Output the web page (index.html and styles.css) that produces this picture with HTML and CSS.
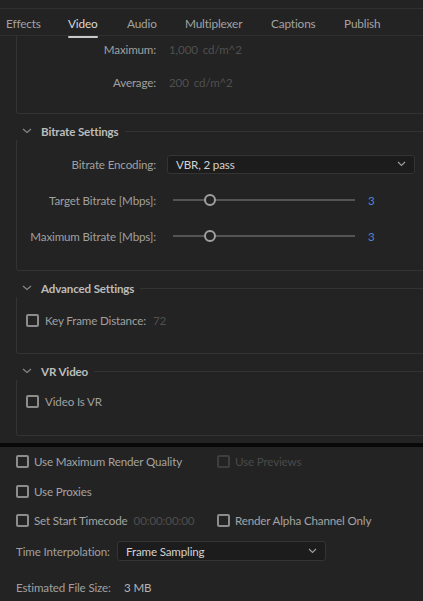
FILE: index.html
```html
<!DOCTYPE html>
<html>
<head>
<meta charset="utf-8">
<link rel="stylesheet" href="styles.css">
</head>
<body>
<div class="app">
  <div class="topstrip"></div>
  <nav class="tabs">
    <span class="tab t-effects"><span class="tl">Effects</span></span>
    <span class="tab t-video active"><span class="tl">Video</span></span>
    <span class="tab t-audio"><span class="tl">Audio</span></span>
    <span class="tab t-mux"><span class="tl">Multiplexer</span></span>
    <span class="tab t-cap"><span class="tl">Captions</span></span>
    <span class="tab t-pub"><span class="tl">Publish</span></span>
  </nav>

  <div class="scroll">
    <div class="panel panel-top">
      <div class="row r-max">
        <span class="label">Maximum:</span>
        <span class="dimval">1,000</span><span class="dimunit">cd/m^2</span>
      </div>
      <div class="row r-avg">
        <span class="label">Average:</span>
        <span class="dimval">200</span><span class="dimunit">cd/m^2</span>
      </div>
    </div>

    <section class="group">
      <div class="ghead">
        <svg class="chev" width="10" height="6" viewBox="0 0 10 6"><path d="M1 1 L5 4.5 L9 1" fill="none" stroke="#8a8a8a" stroke-width="1.1"/></svg>
        <span class="gtitle">Bitrate Settings</span>
        <span class="gline"></span>
      </div>
      <div class="panel gbody gb-bitrate">
        <div class="row">
          <span class="label">Bitrate Encoding:</span>
          <div class="select sel-enc">
            <span>VBR, 2 pass</span>
            <svg width="9" height="6" viewBox="0 0 9 6"><path d="M1 1 L4.5 4.5 L8 1" fill="none" stroke="#a0a0a0" stroke-width="1.1"/></svg>
          </div>
        </div>
        <div class="row">
          <span class="label">Target Bitrate [Mbps]:</span>
          <div class="slider"><span class="thumb"></span></div>
          <span class="sval">3</span>
        </div>
        <div class="row">
          <span class="label">Maximum Bitrate [Mbps]:</span>
          <div class="slider"><span class="thumb"></span></div>
          <span class="sval">3</span>
        </div>
      </div>
    </section>

    <section class="group">
      <div class="ghead">
        <svg class="chev" width="10" height="6" viewBox="0 0 10 6"><path d="M1 1 L5 4.5 L9 1" fill="none" stroke="#8a8a8a" stroke-width="1.1"/></svg>
        <span class="gtitle">Advanced Settings</span>
        <span class="gline"></span>
      </div>
      <div class="panel gbody gb-adv">
        <div class="row crow">
          <span class="cb"></span>
          <span class="ctext">Key Frame Distance:</span>
          <span class="kfval">72</span>
        </div>
      </div>
    </section>

    <section class="group">
      <div class="ghead">
        <svg class="chev" width="10" height="6" viewBox="0 0 10 6"><path d="M1 1 L5 4.5 L9 1" fill="none" stroke="#8a8a8a" stroke-width="1.1"/></svg>
        <span class="gtitle">VR Video</span>
        <span class="gline"></span>
      </div>
      <div class="panel gbody gb-vr">
        <div class="row crow">
          <span class="cb"></span>
          <span class="ctext">Video Is VR</span>
        </div>
      </div>
    </section>
  </div>

  <div class="divider"></div>

  <div class="bottom">
    <div class="brow b1">
      <div class="bcell"><span class="cb"></span><span class="btext">Use Maximum Render Quality</span></div>
      <div class="bcell disabled"><span class="cb"></span><span class="btext">Use Previews</span></div>
    </div>
    <div class="brow b2">
      <div class="bcell"><span class="cb"></span><span class="btext">Use Proxies</span></div>
    </div>
    <div class="brow b3">
      <div class="bcell"><span class="cb"></span><span class="btext">Set Start Timecode</span><span class="tc">00:00:00:00</span></div>
      <div class="bcell"><span class="cb"></span><span class="btext">Render Alpha Channel Only</span></div>
    </div>
    <div class="irow">
      <span class="ilabel">Time Interpolation:</span>
      <div class="select sel-interp">
        <span>Frame Sampling</span>
        <svg width="9" height="6" viewBox="0 0 9 6"><path d="M1 1 L4.5 4.5 L8 1" fill="none" stroke="#a0a0a0" stroke-width="1.1"/></svg>
      </div>
    </div>
    <div class="erow">
      <span class="elabel">Estimated File Size:</span>
      <span class="eval">3 MB</span>
    </div>
  </div>
</div>
</body>
</html>
```

FILE: styles.css
```css
* { box-sizing: border-box; }
html, body { margin: 0; padding: 0; }
body {
  background: #232323;
  font-family: "Lato", "Open Sans", sans-serif;
  font-size: 11.6px;
  letter-spacing: -0.15px;
  color: #a0a0a0;
  width: 423px;
  height: 601px;
  overflow: hidden;
}
.app { width: 423px; height: 601px; overflow: hidden; }

.topstrip { height: 9px; border-bottom: 1px solid #303030; }

.tabs {
  height: 27px;
  display: flex;
  align-items: center;
  padding-left: 6px;
  padding-top: 3px;
  border-bottom: 1px solid #303030;
  white-space: nowrap;
}
.tab { color: #a2a2a2; line-height: 16px; font-size: 11.8px; flex: none; }
.t-effects { width: 62px; }
.t-video { width: 59px; }
.t-audio { width: 58px; }
.t-mux { width: 86px; }
.t-cap { width: 73px; }
.tl { position: relative; display: inline-block; }
.tab.active { color: #d8d8d8; }
.tab.active .tl::after {
  content: "";
  position: absolute;
  left: 0; right: 0;
  bottom: -6px;
  height: 2px;
  background: #c9c9c9;
  border-radius: 1px;
}

.scroll { height: 407px; overflow: hidden; }

.panel {
  margin-left: 16px;
  border-left: 1px solid #333;
  border-bottom: 1px solid #333;
  border-bottom-left-radius: 3px;
}

.row { display: flex; align-items: center; height: 20px; }
.label { width: 139px; text-align: right; color: #a0a0a0; flex: none; white-space: nowrap; }

.panel-top { padding-top: 2px; height: 78px; }
.panel-top .row { height: 22px; }
.panel-top .r-avg { margin-top: 11px; }
.dimval { margin-left: 13px; color: #505050; }
.dimunit { margin-left: 5px; color: #505050; }

.group { margin-top: 8px; }
.ghead { display: flex; align-items: center; height: 18px; }
.chev { margin-left: 22px; flex: none; }
.gtitle { margin-left: 9px; font-weight: bold; color: #bcbcbc; white-space: nowrap; }
.gline { flex: 1; height: 1px; background: #333; margin-left: 6px; }

.gb-bitrate { padding: 14px 0 24px; display: flex; flex-direction: column; gap: 16px; }
.gb-adv { padding: 13px 0 23px; }
.gb-vr { padding: 11px 0 24px; }

.select {
  display: flex;
  align-items: center;
  justify-content: space-between;
  background: #1c1c1c;
  border: 1px solid #343434;
  border-radius: 3px;
  color: #d2d2d2;
  padding: 0 8px 0 8px;
}
.sel-enc { margin-left: 11px; width: 248px; height: 19px; }

.slider {
  position: relative;
  margin-left: 17px;
  width: 182px;
  height: 2px;
  background: #545454;
}
.thumb {
  position: absolute;
  left: 31px;
  top: -5px;
  width: 12px;
  height: 12px;
  border-radius: 50%;
  border: 2px solid #a0a0a0;
  background: #232323;
}
.sval { margin-left: 13px; color: #4d86d6; }

.crow { padding-left: 9px; }
.cb {
  flex: none;
  width: 13px;
  height: 13px;
  border: 2px solid #8c8c8c;
  border-radius: 2px;
}
.ctext { margin-left: 6px; color: #a0a0a0; white-space: nowrap; }
.kfval { margin-left: 7px; color: #505050; }

.divider { height: 4px; background: #080808; }

.bottom { padding-top: 4px; padding-left: 16px; }
.brow { display: grid; grid-template-columns: 201px 1fr; height: 20px; }
.b2 { margin-top: 10px; }
.b3 { margin-top: 9px; }
.bcell { display: flex; align-items: center; white-space: nowrap; }
.btext { margin-left: 5px; color: #a4a4a4; }
.bcell.disabled .cb { border-color: #3e3e3e; }
.bcell.disabled .btext { color: #4a4a4a; }
.tc { margin-left: 6px; color: #4e4e4e; }

.irow { display: flex; align-items: center; margin-top: 11px; height: 20px; }
.ilabel { color: #a0a0a0; white-space: nowrap; width: 101px; flex: none; }
.sel-interp { width: 209px; height: 20px; }

.erow { display: flex; align-items: center; margin-top: 16px; height: 20px; }
.elabel { color: #a0a0a0; width: 108px; flex: none; white-space: nowrap; }
.eval { color: #b4b4b4; }
```
